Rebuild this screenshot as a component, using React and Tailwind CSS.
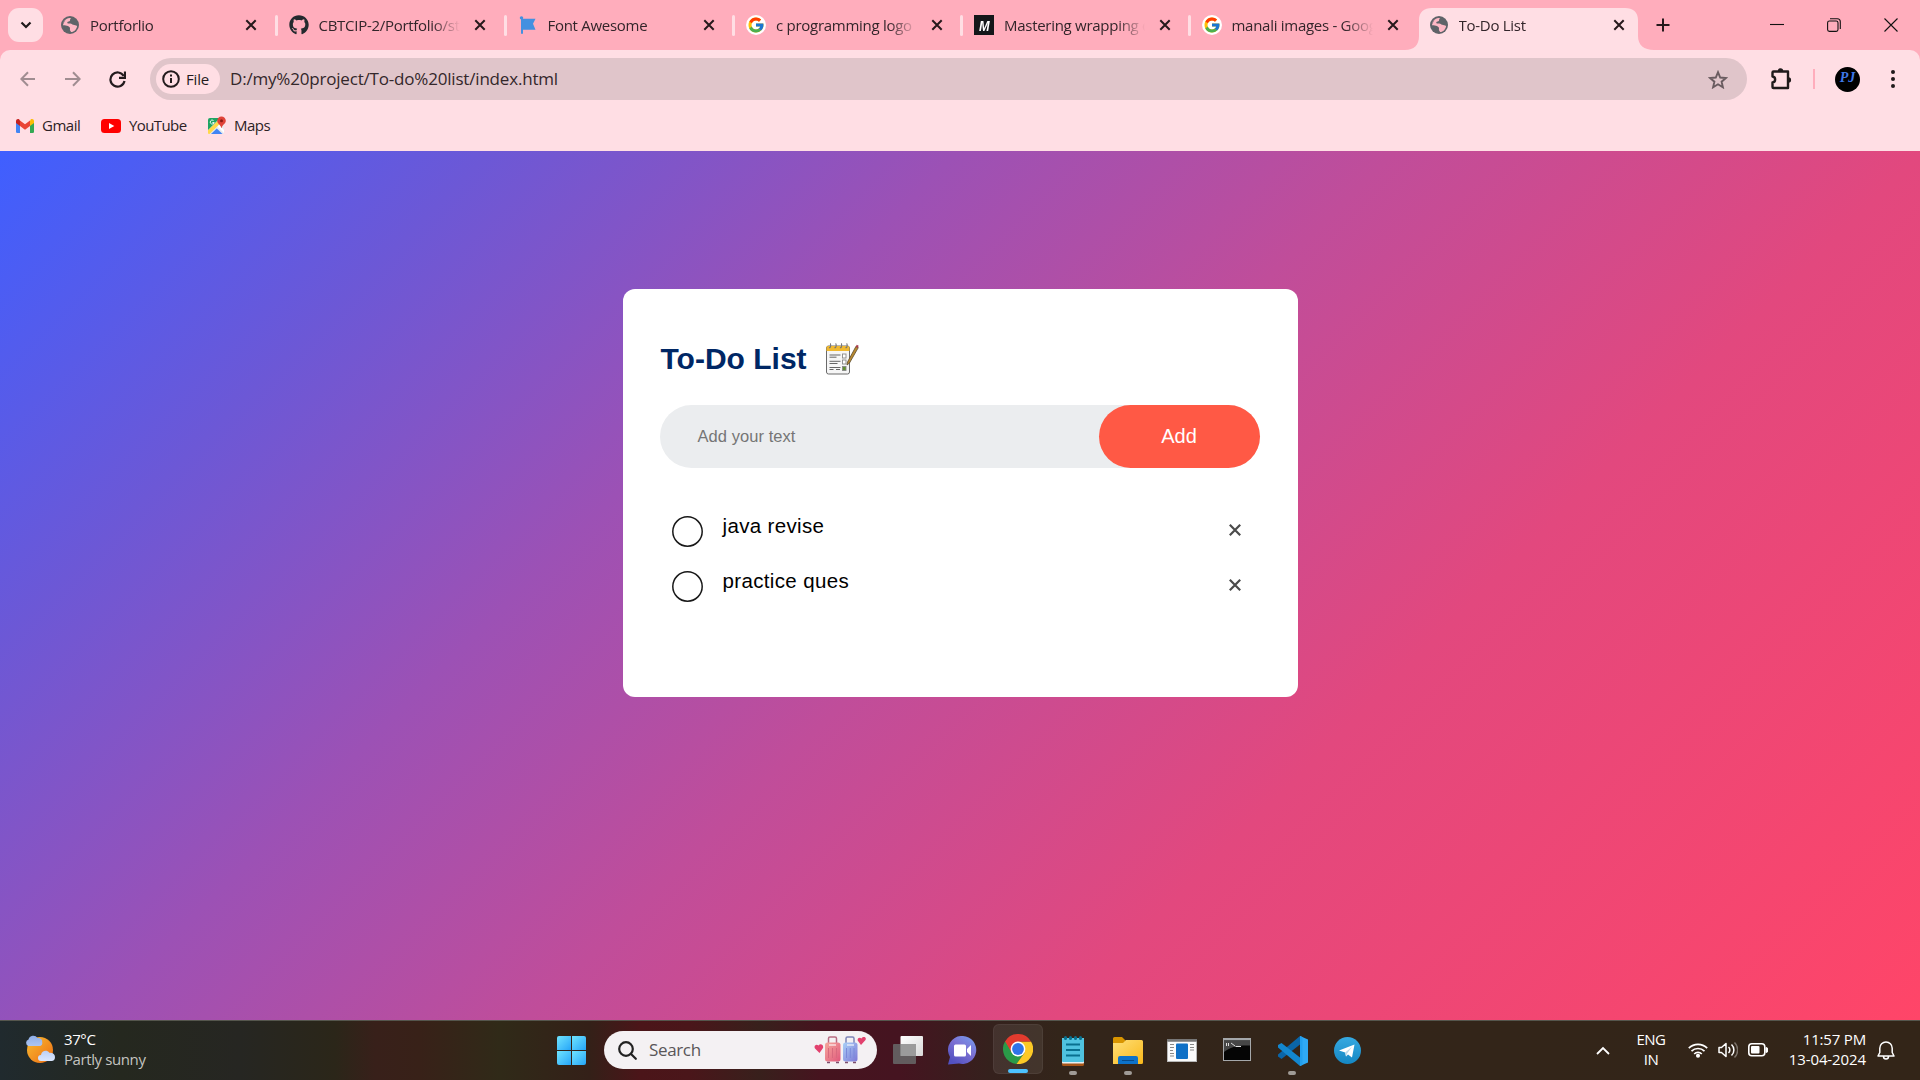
import React from "react";
import { FaGithub } from "react-icons/fa";
import { FcGoogle } from "react-icons/fc";

const Globe = () => (
  <svg viewBox="0 0 18 18" className="h-[18px] w-[18px]">
    <circle cx="9" cy="9" r="9" fill="#5f6368" />
    <path d="M8.600 1.900C4.700 2.200 1.900 5.300 2 9.200c2 .2 3.800.1 5 .9 1.500.9 2.300 1.600 1.900 3.300-.1 1 .8 1.300 1.100 2.700 3.300-.4 5.700-3 6.100-6.200-1.200-.9-2.600-.6-3.900-1.200-1.300-.5-1.600-1.300-2.900-1.300-1 0-1.900.4-2.800-.2-.6-.8.1-1.700 1.100-1.700 1.200 0 1.500-.7 1.500-1.700 0-.8.500-1.200 1.200-1.400-.6-.3-1-.5-1.700-.5z" fill="#ffb8c5" />
    <path d="M2 9c1-2.500 1.500-4.500 3.500-6C3 4.500 2 6.500 2 9z" fill="#5f6368" />
    <path d="M2.500 9.700c1 2.700 3 4.600 5.200 5.900l1-2.200c.1-1.500-.8-2.500-2.300-2.900z" fill="#5f6368" opacity=".35" />
  </svg>
);
const Google = () => (
  <div className="flex h-5 w-5 items-center justify-center rounded-full bg-white">
    <FcGoogle size={18} />
  </div>
);
const Flag = () => (
  <svg viewBox="0 0 20 20" className="h-5 w-5">
    <path d="M2 4.300a1.700 1.700 0 1 1 3 0h12.500l-2.500 5 2.500 6H5v4H3V5z" transform="translate(0 -.6)" fill="#4390e0" />
  </svg>
);
const Medium = () => (
  <div className="flex h-5 w-5 items-center justify-center bg-[#14171a] font-['Liberation_Sans'] text-[15px] leading-none font-bold text-white italic"><span className="scale-x-85">M</span></div>
);
const Close = () => (
  <svg viewBox="0 0 12 12" className="h-3 w-3" stroke="#26191c" strokeWidth="2" fill="none">
    <path d="M1.300 1.300l9.400 9.400M10.700 1.300l-9.400 9.400" />
  </svg>
);

const tabs = [
  { title: "Portforlio", icon: Globe, width: "w-[228.500px]" },
  { title: "CBTCIP-2/Portfolio/style", icon: () => <FaGithub size={20} color="#24292e" />, width: "w-[229px]" },
  { title: "Font Awesome", icon: Flag, width: "w-[228.500px]" },
  { title: "c programming logo", icon: Google, width: "w-[228px]" },
  { title: "Mastering wrapping o", icon: Medium, width: "w-[227.500px]" },
  { title: "manali images - Goog", icon: Google, width: "w-[227px]" },
  { title: "To-Do List", icon: Globe, active: true, width: "w-[228px]" },
];

const Tab = ({ tab, divider }) => {
  const Icon = tab.icon;
  return (
    <div className={"relative h-[50px] shrink-0 " + tab.width}>
      {tab.active && (
        <svg viewBox="0 0 252 42" className="absolute top-2 -left-[11px] h-[42px] w-[252px]">
          <path d="M0 42c9 0 14-5 14-14V12C14 4 19 0 27 0h193c8 0 13 4 13 12v16c0 9 6 14 16 14z" fill="#ffdee4" />
        </svg>
      )}
      <div className="relative flex h-full items-center pl-[13px]">
        <div className="flex w-5 justify-center">{<Icon />}</div>
        <div className="ml-[10px] w-[141px] overflow-hidden mask-r-from-[80%] text-[15px] tracking-[-0.280px] whitespace-nowrap text-[#33252a]">{tab.title}</div>
        <div className={tab.active ? "ml-[13px]" : "ml-[14px]"}><Close /></div>
      </div>
      {divider && <div className="absolute top-[15px] right-[-2px] h-[21px] w-[3px] rounded bg-[#ffdee4]" />}
    </div>
  );
};

const TabStrip = () => (
  <div className="flex h-[50px] items-center bg-[#ffadbc]">
    <div className="ml-2 flex h-[34px] w-[35px] items-center justify-center rounded-[11px] bg-[#ffdee4]">
      <svg viewBox="0 0 12 8" className="h-2 w-3" fill="none" stroke="#201a1b" strokeWidth="2.200"><path d="M1.500 1.500L6 6l4.500-4.500" /></svg>
    </div>
    <div className="ml-[4px] flex">
      {tabs.map((t, i) => <Tab key={t.title} tab={t} divider={i < 5} />)}
    </div>
    <svg viewBox="0 0 14 14" className="ml-[12.500px] h-[14px] w-[14px]" stroke="#26191c" strokeWidth="2"><path d="M7 .5v13M.5 7h13" /></svg>
    <div className="ml-auto flex items-center gap-[43px] pr-[22px]">
      <svg viewBox="0 0 14 14" className="h-[14px] w-[14px]" stroke="#111" strokeWidth="1.100"><path d="M0 6.500h14" /></svg>
      <svg viewBox="0 0 14 14" className="h-[14px] w-[14px]" stroke="#111" strokeWidth="1.100" fill="none"><rect x=".6" y="3" width="10.400" height="10.400" rx="1.800" /><path d="M3 .7h7.300a3 3 0 0 1 3 3V11" /></svg>
      <svg viewBox="0 0 14 14" className="h-[14px] w-[14px]" stroke="#111" strokeWidth="1.100"><path d="M.5.5l13 13M13.500.5l-13 13" /></svg>
    </div>
  </div>
);

const Toolbar = () => (
  <div className="flex h-[58px] items-center rounded-t-[10px] bg-[#ffdee4]">
    <svg viewBox="0 0 16 16" className="ml-5 h-4 w-4" fill="none" stroke="#a08d91" strokeWidth="2"><path d="M15 8H1.500M8 1.200L1.300 8 8 14.800" /></svg>
    <svg viewBox="0 0 16 16" className="ml-[29px] h-4 w-4" fill="none" stroke="#a08d91" strokeWidth="2"><path d="M0 8h14.500M8 1.200L14.700 8 8 14.800" /></svg>
    <svg viewBox="0 0 17 17" className="ml-[28px] h-[17px] w-[17px]" fill="none" stroke="#231b1d" strokeWidth="2.200"><path d="M14.700 5A7.100 7.100 0 1 0 15.500 10" /><path d="M16 .5v6.300h-6" /></svg>
    <div className="ml-[24px] flex h-[42px] w-[1597px] items-center rounded-full bg-[#e0c5ca] pl-[6px]">
      <div className="flex h-[30px] w-[64px] items-center rounded-full bg-[#ffdee4] pl-[6px]">
        <svg viewBox="0 0 18 18" className="h-[18px] w-[18px]" fill="none" stroke="#231b1d" strokeWidth="2"><circle cx="9" cy="9" r="7.800" /><path d="M9 8v5M9 4.600v1.900" /></svg>
        <span className="ml-[6px] text-[15px] font-medium tracking-[-0.200px] text-[#231b1d]">File</span>
      </div>
      <span className="ml-[10px] text-[17px] tracking-[-0.190px] text-[#33272a]">D:/my%20project/To-do%20list/index.html</span>
      <svg viewBox="0 0 20 19" className="mr-[19px] ml-auto h-[19px] w-5" fill="none" stroke="#6a5c60" strokeWidth="1.900"><path d="M10 2.200l2.200 5.300 5.700.5-4.300 3.700 1.300 5.600-4.900-3-4.900 3 1.300-5.600L2.100 8l5.700-.5z" /></svg>
    </div>
    <svg viewBox="0 0 22 22" className="ml-[23px] h-[22px] w-[22px]"><path d="M3.500 3.500h14.500V20H3.500a1 1 0 0 1-1-1v-4.500c3.500-.5 3.500-5.500 0-6V4.500a1 1 0 0 1 1-1z" fill="none" stroke="#201a1b" strokeWidth="2.400" strokeLinejoin="round" /><path d="M7.800 3a2.700 2.700 0 0 1 5.400 0zM18.500 9.300a2.600 2.600 0 0 1 0 5.200z" fill="#201a1b" /></svg>
    <div className="ml-[21px] h-5 w-[2px] bg-[#ffadbc]" />
    <div className="ml-[20px] flex h-[25px] w-[25px] items-center justify-center rounded-full bg-black pb-[3px] font-['Liberation_Serif'] text-[14px] leading-none font-bold text-[#3f78e8] italic">PJ</div>
    <div className="ml-[30.500px] flex flex-col gap-[3px]">
      {[0, 1, 2].map((i) => <div key={i} className="h-1 w-1 rounded-full bg-[#201a1b]" />)}
    </div>
  </div>
);

const Bookmarks = () => (
  <div className="flex h-[43px] items-center bg-[#ffdee4] pb-[7px] pl-4 text-[15px] text-[#2c2225]">
    <svg viewBox="0 0 18 14" className="h-[14px] w-[18px]">
      <path d="M0 3v9.700A1.300 1.300 0 0 0 1.300 14H4V6z" fill="#4285f4" /><path d="M18 3v9.700a1.300 1.300 0 0 1-1.300 1.300H14V6z" fill="#34a853" />
      <path d="M14 2v5l4-3V2c0-1.800-2-2.500-3.300-1.500z" fill="#fbbc04" /><path d="M4 7V1.500l5 3.800 5-3.800V7l-5 3.800z" fill="#ea4335" /><path d="M0 2v2l4 3V1.500L3.300.5C2-.5 0 .2 0 2z" fill="#c5221f" />
    </svg>
    <span className="-mt-[2px] ml-[8px] w-[39px] tracking-[-0.500px]">Gmail</span>
    <svg viewBox="0 0 20 14" className="ml-5 h-[14px] w-5"><rect width="20" height="14" rx="3.500" fill="#f00" /><path d="M8 4l5.300 3L8 10z" fill="#fff" /></svg>
    <span className="-mt-[2px] ml-[8px] w-[58px] tracking-[-0.600px]">YouTube</span>
    <svg viewBox="0 0 20 19" className="-mt-[2px] ml-[20px] h-[19px] w-5">
      <rect x="1" y="2" width="16" height="16" rx="2" fill="#e8eaed" /><path d="M1 14L13 2.500l2.500 2.800L2.500 18H2a1 1 0 0 1-1-1z" fill="#ffd84a" /><path d="M1 4a2 2 0 0 1 2-2h10L1 14z" fill="#1fa463" /><path d="M4 18l5.800-5.500L15.500 18z" fill="#4285f4" /><path d="M10.500 10.500l1.800-1.800L17 14v3z" fill="#fff" />
      <path d="M14.500.5a4.300 4.300 0 0 1 4.300 4.300c0 3-3.600 4-4.100 7.200h-.4c-.5-3.200-4.100-4.200-4.100-7.200A4.300 4.300 0 0 1 14.500.5z" fill="#e04338" /><circle cx="14.500" cy="4.800" r="1.500" fill="#8c1a14" />
      <path d="M6.500 4.500a2 2 0 1 0 .7 2H5.400" stroke="#fff" strokeWidth=".9" fill="none" />
    </svg>
    <span className="-mt-[2px] ml-[7px] tracking-[-0.500px]">Maps</span>
  </div>
);

const NoteIcon = () => (
  <svg viewBox="0 0 34 34" className="mt-[2px] ml-[18px] h-[34px] w-[34px]">
    <rect x="1.500" y="4" width="23" height="28" rx="2" fill="#f6f6f6" stroke="#6a6a6a" />
    <path d="M1.500 9V5.500a1.500 1.500 0 0 1 1.500-1.500h20a1.500 1.500 0 0 1 1.500 1.500V9z" fill="#f1b92f" />
    <g fill="none" stroke="#777" strokeWidth="1.100"><path d="M4 5.500c2 1 2-4 1-4M9.500 5.500c2 1 2-4 1-4M15 5.500c2 1 2-4 1-4M20.500 5.500c2 1 2-4 1-4" /></g>
    <path d="M4.500 13h11M4.500 15.200h7M4.500 19.300h11M4.500 21.500h8M4.500 25.500h11M4.500 27.500h4M11 27.500h4" stroke="#666" strokeWidth="1" />
    <g fill="#fff" stroke="#888" strokeWidth=".9"><rect x="17.500" y="12" width="3.500" height="4" /><rect x="17.500" y="18" width="3.500" height="4" /><rect x="17.500" y="24.500" width="3.500" height="4" fill="#62902f" /></g>
    <path d="M22 23l.5-3L31 4.300l2.300 1.300L24.500 21z" fill="#b98a2f" stroke="#5b4a2d" strokeWidth=".8" /><path d="M30.700 5l1-2.300 2 1-1 2.300z" fill="#a83b4b" />
  </svg>
);

const Item = ({ text }) => (
  <li className="flex h-[55px] items-start pl-[12px]">
    <svg viewBox="0 0 31 31" className="mt-[12px] h-[31px] w-[31px]"><circle cx="15.500" cy="15.500" r="14.700" fill="none" stroke="#181818" strokeWidth="1.500" /></svg>
    <span className="mt-[8px] ml-[20px] text-[20.500px] leading-[28px] tracking-[0.350px] text-black">{text}</span>
    <svg viewBox="0 0 12 12" className="mt-[20px] mr-[19px] ml-auto h-3 w-3" stroke="#4b4b4b" strokeWidth="2.200"><path d="M.8.8l10.400 10.400M11.200.8L.8 11.200" /></svg>
  </li>
);

const TodoCard = () => (
  <div className="h-[408px] w-[675px] rounded-[12px] bg-white pt-[50px] pr-[38px] pl-[37px] font-['Liberation_Sans',Arial,sans-serif]">
    <h1 className="flex h-[38px] items-center pl-[1px] text-[30px] font-bold text-[#002765]">To-Do List<NoteIcon /></h1>
    <div className="mt-[28px] flex h-[63px] items-center rounded-full bg-[#ebedef] pl-[38px]">
      <span className="text-[16.500px] tracking-[0.060px] text-[#757575]">Add your text</span>
      <button className="ml-auto h-[63px] w-[161px] rounded-full bg-[#ff5945] pb-[2px] text-[20px] text-white">Add</button>
    </div>
    <ul className="mt-[36px]"><Item text="java revise" /><Item text="practice ques" /></ul>
  </div>
);

const Slot = ({ children, dot, active }) => (
  <div className={"relative flex h-[50px] w-[50px] items-center justify-center rounded-[6px] " + (active ? "-mt-[2px] border border-white/5 bg-white/8" : "")}>
    {children}
    {dot && <div className="absolute bottom-[1px] left-[21px] h-1 w-2 rounded-full bg-[#a09b96]" />}
    {active && <div className="absolute bottom-0 left-[14px] h-1 w-5 rounded-full bg-[#4cc2ff]" />}
  </div>
);

const Luggage = () => (
  <svg viewBox="0 0 52 28" className="h-7 w-[52px]">
    <defs>
      <linearGradient id="lugR" x2="1" y2="1"><stop stopColor="#f5a79c" /><stop offset="1" stopColor="#e0587c" /></linearGradient>
      <linearGradient id="lugB" x2="1" y2="1"><stop stopColor="#a9d0f7" /><stop offset="1" stopColor="#7d78d6" /></linearGradient>
    </defs>
    <path d="M14.500 8V2.500q0-1.500 1.500-1.500h5q1.500 0 1.500 1.500V8" stroke="#b76c83" strokeWidth="1.500" fill="none" /><path d="M32 8V2.500Q32 1 33.500 1h5Q40 1 40 2.500V8" stroke="#7c84b8" strokeWidth="1.500" fill="none" />
    <rect x="11" y="6.500" width="15.500" height="19" rx="2.500" fill="url(#lugR)" /><rect x="29" y="6.500" width="14.500" height="19" rx="2.500" fill="url(#lugB)" />
    <path d="M14.500 12v10M18.500 12v10M22.500 12v10" stroke="#d86a7e" /><path d="M32.500 12v10M36.300 12v10M40 12v10" stroke="#7b8ada" /><path d="M15 9h7M33 9h7" stroke="#fff" strokeWidth="1.500" opacity=".7" />
    <path d="M13 26.500h3M22 26.500h3M31 26.500h3M39 26.500h3" stroke="#7c4d6d" strokeWidth="1.600" />
    <path d="M5.500 17L1 12.500C-.5 10 2 7.500 4.500 9.500 6.500 7 10 9 9 12z" fill="#e2416e" /><path d="M47 9l-3-4c-1.500-2.500 1.500-4.500 3.500-2.500C49 0 53 1 51.500 4z" fill="#e2416e" />
  </svg>
);

const Taskbar = () => (
  <div className="flex h-[60px] items-center border-t border-[#55564d] bg-[linear-gradient(90deg,#202a2e_0,#25281f_120px,#262622_240px,#2b2619_335px,#38201a_375px,#382118_420px,#302a18_500px,#342018_590px,#4b1519_640px,#4a161a_690px,#38201c_760px,#46141f_820px,#451420_900px,#35211d_990px,#33251a_1060px,#332518_100%)] text-white">
    <div className="flex w-[557px] shrink-0 items-center pl-[25px]">
      <svg viewBox="0 0 30 28" className="-mt-[4px] h-7 w-[30px]">
        <defs><linearGradient id="sun" x2="1" y2="1"><stop stopColor="#f8bd31" /><stop offset="1" stopColor="#ee6c13" /></linearGradient><linearGradient id="cloud" x2="0" y2="1"><stop stopColor="#8eaee8" /><stop offset="1" stopColor="#dbe7ff" /></linearGradient></defs>
        <circle cx="15" cy="15" r="13" fill="url(#sun)" />
        <path d="M3.500 11a3.400 3.400 0 0 1 0-6.500A5 5 0 0 1 12.500 3c3.500 0 5 1.800 4.700 4 .5 2-.5 4-2.700 4zM16 26a3 3 0 0 1 0-6c.8-4.500 6-5.500 8.300-2.200C28 17.500 30 19.500 30 22s-1.200 4-3.500 4z" fill="url(#cloud)" />
      </svg>
      <div className="-mt-[4px] ml-[9px] text-[15px] leading-[20px]">
        <div className="tracking-[-0.400px]">37°C</div><div className="tracking-[-0.400px] text-[#c4c4c0]">Partly sunny</div>
      </div>
    </div>
    <div className="grid h-[29px] w-[29px] shrink-0 grid-cols-2 gap-[1px] overflow-hidden rounded-[2px] *:bg-linear-to-br *:from-[#6fe4fd] *:to-[#22a5f8]"><i /><i /><i /><i /></div>
    <div className="-mt-[1px] ml-[18px] flex h-[38px] w-[273px] shrink-0 items-center rounded-full bg-[#f4f1f3] pl-[14px]">
      <svg viewBox="0 0 19 19" className="h-[19px] w-[19px]" fill="none" stroke="#222" strokeWidth="2.200"><circle cx="8" cy="8" r="6.800" /><path d="M12.800 12.800l5 5" strokeLinecap="round" /></svg>
      <span className="ml-[12px] text-[17px] tracking-[-0.350px] text-[#595658]">Search</span>
      <div className="mr-[11px] ml-auto"><Luggage /></div>
    </div>
    <div className="ml-[6px] flex shrink-0 gap-[4.900px]">
      <Slot><svg viewBox="0 0 30 28" className="-mt-[2px] h-7 w-[30px]"><defs><linearGradient id="tv" x2="1" y2="1"><stop stopColor="#fff" /><stop offset="1" stopColor="#d8d8d8" /></linearGradient></defs><rect x="7.500" width="22.500" height="20" rx="1" fill="url(#tv)" /><rect y="8" width="23" height="20" rx="1" fill="#666" opacity=".88" /><rect x="7.500" y="8" width="15.500" height="12" fill="#9b9b9b" /></svg></Slot>
      <Slot><svg viewBox="0 0 29 29" className="-mt-[1px] h-[29px] w-[29px]"><defs><linearGradient id="chat" x1="1" x2=".3" y2="1"><stop stopColor="#75a0f0" /><stop offset=".5" stopColor="#7c71d3" /><stop offset="1" stopColor="#5250c0" /></linearGradient></defs><path d="M15 0a14 14 0 1 1-4 27.600L0 28.500l2-7.500A14 14 0 0 1 15 0z" fill="url(#chat)" /><rect x="6" y="8.500" width="12" height="12" rx="1.500" fill="#fff" /><path d="M19 13l4-4v11l-4-4z" fill="#fff" /></svg></Slot>
      <Slot active><svg viewBox="0 0 30 30" className="h-[30px] w-[30px]"><path d="M2 7.500A15 15 0 0 0 13.500 30L21.500 18.700 15 15z" fill="#2a9b48" /><path d="M28 7.500A15 15 0 0 1 13.500 30l8-11.300L15 7.500z" fill="#fcc926" /><path d="M2 7.500A15 15 0 0 1 28 7.500H15L8.500 18.800z" fill="#e33b2e" /><path d="M2 7.500l6.500 11.300-5 1z" fill="#2a9b48" /><circle cx="15" cy="15" r="7.400" fill="#fff" /><circle cx="15" cy="15" r="5.900" fill="#2f74e8" /></svg></Slot>
      <Slot dot><svg viewBox="0 0 22 30" className="h-[30px] w-[22px]"><rect y="2" width="22" height="28" rx="1.500" fill="#a75518" /><rect y="2" width="22" height="25.500" rx="1" fill="#e7eff2" /><rect y="2" width="22" height="24" rx="1" fill="#4fc3e0" /><path d="M4 8.500h14M4 14h14M4 19.500h14" stroke="#08708f" strokeWidth="1.800" /><path d="M3.500 1.500v1M8.500 1.500v1M13.500 1.500v1M18.500 1.500v1" stroke="#08708f" strokeWidth="3" strokeLinecap="round" /></svg></Slot>
      <Slot dot><svg viewBox="0 0 30 27" className="h-[27px] w-[30px]"><defs><linearGradient id="fold" x2="1" y2="1"><stop stopColor="#ffdf78" /><stop offset="1" stopColor="#f9b81a" /></linearGradient></defs><path d="M0 1.500Q0 0 1.500 0H9l4 4h14v8H0z" fill="#d99500" /><path d="M0 6h10l3-3h15.500Q30 3 30 4.500v21q0 1.500-1.500 1.500H0z" fill="url(#fold)" /><path d="M5 27v-6q0-2 2-2h16q2 0 2 2v6z" fill="#0d72c9" /><path d="M9 23.500h12" stroke="#064a8a" /></svg></Slot>
      <Slot><svg viewBox="0 0 30 23" className="-mt-[1px] h-[23px] w-[30px]"><rect width="30" height="23" fill="#b7b7b7" /><rect x="1" y="3" width="28" height="19" fill="#fafafa" /><rect width="30" height="2.500" fill="#777" /><rect x="9" y="4.500" width="12" height="15.500" rx="1" fill="#0f70c6" /><path d="M3 5.500h4M3 8.500h4M3 11.500h3M3 14.500h4M3 17h4M23 5.500h4M23 8.500h4M23 11h4" stroke="#888" /></svg></Slot>
      <Slot><svg viewBox="0 0 28 23" className="-mt-[2px] h-[23px] w-7"><rect width="28" height="23" fill="#a5a8ab" /><rect x="1" y="2.500" width="26" height="19.500" fill="#050505" /><path d="M1 2.500h26v5C15 7 7 9 1 14z" fill="#464646" /><path d="M3.500 5v3M5.500 5v3M8 5l4 3M12.500 8.500H18" stroke="#ddd" /></svg></Slot>
      <Slot dot><svg viewBox="0 0 30 30" className="ml-[2px] h-[30px] w-[30px]"><path d="M22 0l8 3.500v23L22 30z" fill="#2fa9f4" /><path d="M22 0v8.500L3.500 23 0 20.500v-2z" fill="#0a65a8" /><path d="M22 30v-8.500L3.500 7 0 9v2.500z" fill="#1387cf" /><path d="M22 0l2.500 1v28L22 30z" fill="#229fee" /></svg></Slot>
      <Slot><svg viewBox="0 0 27 27" className="-mt-[1px] h-[27px] w-[27px]"><defs><linearGradient id="tg" x2="0" y2="1"><stop stopColor="#36a9e1" /><stop offset="1" stopColor="#1587c3" /></linearGradient></defs><circle cx="13.500" cy="13.500" r="13.500" fill="url(#tg)" /><path d="M5 13.500L20.500 7.500 18 20.500l-4-3-2 2-.8-4z" fill="#fff" /><path d="M11.200 15.500L18 9.700l-5 7-1 2.800z" fill="#bcd9ea" /></svg></Slot>
    </div>
    <svg viewBox="0 0 14 9" className="-mt-[1px] ml-auto h-[9px] w-[14px]" fill="none" stroke="#fff" strokeWidth="1.800"><path d="M1 8l6-6 6 6" /></svg>
    <div className="-mt-[3px] ml-[25px] w-[32px] text-center text-[15px] leading-[20px] tracking-[-0.500px] whitespace-nowrap">ENG<br />IN</div>
    <svg viewBox="0 0 20 16" className="-mt-[1px] ml-[21px] h-4 w-5" fill="none" stroke="#fff" strokeWidth="1.700"><path d="M.8 6.200a13 13 0 0 1 18.400 0M3.500 9.200a9.200 9.200 0 0 1 13 0M6.200 12a5.400 5.400 0 0 1 7.600 0" /><circle cx="10" cy="13.800" r="1.200" fill="#fff" /></svg>
    <svg viewBox="0 0 20 18" className="-mt-[1px] ml-[10px] h-[18px] w-5" fill="none" stroke="#fff" strokeWidth="1.500"><path d="M1 6.500h2.500L8 2.500v13l-4.500-4H1z" strokeLinejoin="round" /><path d="M10.500 6a4 4 0 0 1 0 6M13.500 3.500a7.500 7.500 0 0 1 0 11" /><path d="M16.500 1.500a10.500 10.500 0 0 1 0 15" opacity=".35" /></svg>
    <svg viewBox="0 0 20 14" className="-mt-[1px] ml-[10px] h-[14px] w-5"><rect x=".8" y=".8" width="16" height="12" rx="3" fill="none" stroke="#fff" strokeWidth="1.600" /><rect x="3" y="3" width="8.500" height="7.500" rx="1" fill="#fff" /><path d="M18 4.500l2 1v3l-2 1z" fill="#fff" stroke="#fff" /></svg>
    <div className="-mt-[4px] ml-[18px] w-[80px] text-right text-[15px] leading-[20px] whitespace-nowrap"><div className="tracking-[-0.180px]">11:57 PM</div><div className="tracking-[-0.100px]">13-04-2024</div></div>
    <svg viewBox="0 0 18 19" className="-mt-[1px] mr-[25px] ml-[11px] h-[19px] w-[18px]" fill="none" stroke="#fff" strokeWidth="1.500"><path d="M1 15l1.800-3.500V7.200a6.200 6.200 0 0 1 12.400 0v4.300L17 15zM6.500 15.500a2.500 2.500 0 0 0 5 0" strokeLinejoin="round" /></svg>
  </div>
);

export default function App() {
  return (
    <div className="flex h-[1080px] w-[1920px] flex-col overflow-hidden bg-[#ffadbc] font-['Open_Sans','Noto_Sans',sans-serif]">
      <TabStrip />
      <Toolbar />
      <Bookmarks />
      <main className="flex flex-1 justify-center bg-[linear-gradient(135deg,#3f5fff_0%,#6c58d6_17.600%,#9c51b5_34.400%,#c04d9a_50%,#e2487e_69%,#ff4568_100%)] pt-[138px]"><TodoCard /></main>
      <Taskbar />
    </div>
  );
}
